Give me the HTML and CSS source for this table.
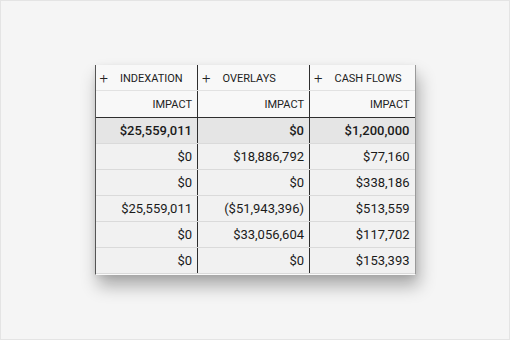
FILE: index.html
```html
<!DOCTYPE html>
<html lang="en">
<head>
  <meta charset="UTF-8">
  <title>Impact Grid</title>
  <link rel="stylesheet" href="styles.css">
</head>
<body>
  <div class="frame">
    <div class="grid-card">
      <table class="impact-grid">
        <colgroup>
          <col class="col-indexation">
          <col class="col-overlays">
          <col class="col-cashflows">
        </colgroup>
        <thead>
          <tr class="group-row">
            <th><span class="expand">+</span>INDEXATION</th>
            <th><span class="expand">+</span>OVERLAYS</th>
            <th><span class="expand">+</span>CASH FLOWS</th>
          </tr>
          <tr class="label-row">
            <th>IMPACT</th>
            <th>IMPACT</th>
            <th>IMPACT</th>
          </tr>
        </thead>
        <tbody>
          <tr class="total-row">
            <td>$25,559,011</td>
            <td>$0</td>
            <td>$1,200,000</td>
          </tr>
          <tr>
            <td>$0</td>
            <td>$18,886,792</td>
            <td>$77,160</td>
          </tr>
          <tr>
            <td>$0</td>
            <td>$0</td>
            <td>$338,186</td>
          </tr>
          <tr>
            <td>$25,559,011</td>
            <td>($51,943,396)</td>
            <td>$513,559</td>
          </tr>
          <tr>
            <td>$0</td>
            <td>$33,056,604</td>
            <td>$117,702</td>
          </tr>
          <tr>
            <td>$0</td>
            <td>$0</td>
            <td>$153,393</td>
          </tr>
        </tbody>
      </table>
    </div>
  </div>
</body>
</html>
```

FILE: styles.css
```css
:root {
  --page-bg: #f5f5f5;
  --header-bg: #f8f8f8;
  --cell-bg: #f1f1f1;
  --total-bg: #e5e5e5;
  --row-line: #dadada;
  --divider: #2e2e2e;
  --text: #1a1a1a;
}

html, body {
  margin: 0;
  padding: 0;
}

body {
  font-family: Roboto, "Liberation Sans", sans-serif;
  color: var(--text);
}

.frame {
  box-sizing: border-box;
  width: 510px;
  height: 340px;
  border: 1px solid #e4e4e4;
  background: var(--page-bg);
  display: flex;
  align-items: center;
  justify-content: center;
}

.grid-card {
  background: var(--cell-bg);
  border-left: 1px solid #555;
  border-right: 1px solid #9a9a9a;
  border-bottom: 1px solid #fafafa;
  box-shadow: 3px 11px 16px rgba(0, 0, 0, 0.3), 0 2px 6px rgba(0, 0, 0, 0.08);
}

.impact-grid {
  border-collapse: collapse;
  table-layout: fixed;
  width: 319px;
}

.col-indexation { width: 102px; }
.col-overlays { width: 112px; }
.col-cashflows { width: 105px; }

.impact-grid th,
.impact-grid td {
  padding: 0 5px 0 4px;
  white-space: nowrap;
  border-left: 1px solid var(--divider);
}

.impact-grid th:first-child,
.impact-grid td:first-child {
  border-left: none;
}

.impact-grid th {
  background: var(--header-bg);
  font-size: 11px;
  font-weight: 400;
  color: #222;
}

.group-row th {
  height: 25px;
  text-align: left;
  border-bottom: 1px solid #e2e2e2;
}

.expand {
  display: inline-block;
  font-size: 15px;
  font-weight: 300;
  margin-right: 12px;
  vertical-align: -1px;
}

.label-row th {
  height: 26px;
  text-align: right;
  border-bottom: 1px solid var(--divider);
}

.impact-grid td {
  height: 25px;
  text-align: right;
  font-size: 13px;
  background: var(--cell-bg);
  border-bottom: 1px solid var(--row-line);
}

.total-row td {
  background: var(--total-bg);
  font-weight: 500;
}
```
